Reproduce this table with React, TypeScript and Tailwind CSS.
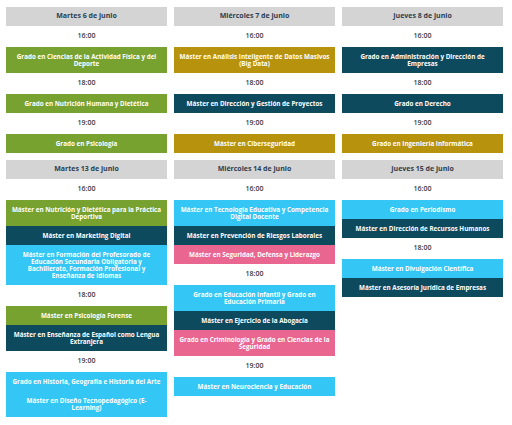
type Color = "green" | "gold" | "navy" | "cyan" | "pink";

type Slot = { time: string; items: { label: string; color: Color }[] };
type Day = { title: string; slots: Slot[] };

const colors: Record<Color, string> = {
  green: "bg-[#78a22f]",
  gold: "bg-[#b7920d]",
  navy: "bg-[#0e4a5e]",
  cyan: "bg-[#34c6f4]",
  pink: "bg-[#e86690]",
};

// "\n" marks a forced line break where the original wraps
const days: Day[] = [
  {
    title: "Martes 6 de junio",
    slots: [
      { time: "16:00", items: [{ label: "Grado en Ciencias de la Actividad Física y del Deporte", color: "green" }] },
      { time: "18:00", items: [{ label: "Grado en Nutrición Humana y Dietética", color: "green" }] },
      { time: "19:00", items: [{ label: "Grado en Psicología", color: "green" }] },
    ],
  },
  {
    title: "Miércoles 7 de junio",
    slots: [
      { time: "16:00", items: [{ label: "Máster en Análisis Inteligente de Datos Masivos (Big Data)", color: "gold" }] },
      { time: "18:00", items: [{ label: "Máster en Dirección y Gestión de Proyectos", color: "navy" }] },
      { time: "19:00", items: [{ label: "Máster en Ciberseguridad", color: "gold" }] },
    ],
  },
  {
    title: "Jueves 8 de junio",
    slots: [
      { time: "16:00", items: [{ label: "Grado en Administración y Dirección de Empresas", color: "navy" }] },
      { time: "18:00", items: [{ label: "Grado en Derecho", color: "navy" }] },
      { time: "19:00", items: [{ label: "Grado en Ingeniería Informática", color: "gold" }] },
    ],
  },
  {
    title: "Martes 13 de junio",
    slots: [
      {
        time: "16:00",
        items: [
          { label: "Máster en Nutrición y Dietética para la Práctica Deportiva", color: "green" },
          { label: "Máster en Marketing Digital", color: "navy" },
          {
            label:
              "Máster en Formación del Profesorado de Educación Secundaria Obligatoria y Bachillerato, Formación Profesional y Enseñanza de Idiomas",
            color: "cyan",
          },
        ],
      },
      {
        time: "18:00",
        items: [
          { label: "Máster en Psicología Forense", color: "green" },
          { label: "Máster en Enseñanza de Español como Lengua Extranjera", color: "navy" },
        ],
      },
      {
        time: "19:00",
        items: [
          { label: "Grado en Historia, Geografía e Historia del Arte", color: "cyan" },
          { label: "Máster en Diseño Tecnopedagógico (E-\nLearning)", color: "cyan" },
        ],
      },
    ],
  },
  {
    title: "Miércoles 14 de junio",
    slots: [
      {
        time: "16:00",
        items: [
          { label: "Máster en Tecnología Educativa y Competencia Digital Docente", color: "cyan" },
          { label: "Máster en Prevención de Riesgos Laborales", color: "navy" },
          { label: "Máster en Seguridad, Defensa y Liderazgo", color: "pink" },
        ],
      },
      {
        time: "18:00",
        items: [
          { label: "Grado en Educación Infantil y Grado en Educación Primaria", color: "cyan" },
          { label: "Máster en Ejercicio de la Abogacía", color: "navy" },
          { label: "Grado en Criminología y Grado en Ciencias de la Seguridad", color: "pink" },
        ],
      },
      { time: "19:00", items: [{ label: "Máster en Neurociencia y Educación", color: "cyan" }] },
    ],
  },
  {
    title: "Jueves 15 de junio",
    slots: [
      {
        time: "16:00",
        items: [
          { label: "Grado en Periodismo", color: "cyan" },
          { label: "Máster en Dirección de Recursos Humanos", color: "navy" },
        ],
      },
      {
        time: "18:00",
        items: [
          { label: "Máster en Divulgación Científica", color: "cyan" },
          { label: "Máster en Asesoría Jurídica de Empresas", color: "navy" },
        ],
      },
    ],
  },
];

function DayColumn({ day }: { day: Day }) {
  return (
    <div className="flex flex-col">
      <div className="h-[19px] bg-[#d4d4d4] flex items-center justify-center text-[7px] font-bold text-[#2c3e50]">
        {day.title}
      </div>
      {day.slots.map((s) => (
        <div key={s.time} className="flex flex-col">
          <div className="h-[21px] flex items-center justify-center text-[7px] font-semibold text-[#3a3a3a]">
            {s.time}
          </div>
          {s.items.map((it) => (
            <div
              key={it.label}
              className={`${colors[it.color]} px-[5px] py-[6px] text-center text-[6.3px] leading-[7px] font-bold text-white whitespace-pre-line`}
            >
              {it.label}
            </div>
          ))}
        </div>
      ))}
    </div>
  );
}

export default function App() {
  return (
    <div
      className="w-[512px] h-[425px] bg-white pt-[7px] pl-[6px] grid grid-cols-[161px_161px_161px] gap-x-[7px] gap-y-[7px] content-start items-start"
      style={{ fontFamily: "'Open Sans', Lato, sans-serif" }}
    >
      {days.map((d) => (
        <DayColumn key={d.title} day={d} />
      ))}
    </div>
  );
}
